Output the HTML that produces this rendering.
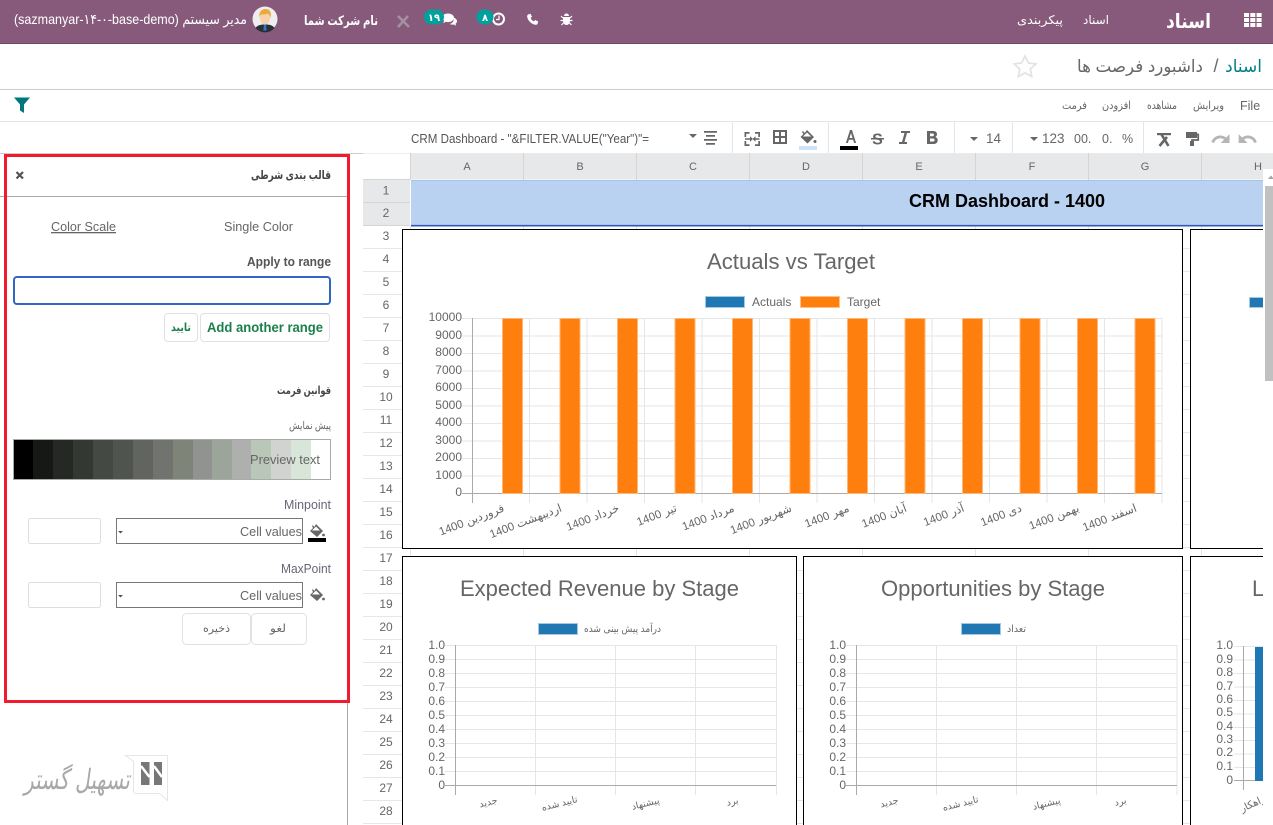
<!DOCTYPE html>
<html lang="fa"><head><meta charset="utf-8"><title>اسناد</title>
<style>
html,body{margin:0;padding:0;background:#fff;overflow:hidden}
svg{display:block;font-family:"Liberation Sans","DejaVu Sans",sans-serif}
.r{direction:rtl;text-anchor:start}
.m{text-anchor:middle}
.e{text-anchor:end}
.g{fill:#666}
.yl{fill:#666;font-size:12px;text-anchor:end}
.xl{fill:#666;font-size:10px;direction:rtl;text-anchor:start}
.ttl{fill:#666;font-size:22px}
.hd{fill:#666;font-size:11px;text-anchor:middle}
.rn{fill:#666;font-size:12px;text-anchor:middle}
.n{fill:#fff;font-size:12px}
.t{fill:#666;font-size:13px}
</style></head><body>
<svg width="1273" height="825" viewBox="0 0 1273 825" xmlns="http://www.w3.org/2000/svg">
<rect width="1273" height="825" fill="#fff"/>

<!-- navbar -->
<rect width="1273" height="43" fill="#875A7B"/>
<rect y="43" width="1273" height="1" fill="#6d4a63"/>
<g fill="#fff">
<rect x="1244" y="13" width="5" height="4"/><rect x="1250.3" y="13" width="5" height="4"/><rect x="1256.6" y="13" width="5" height="4"/>
<rect x="1244" y="18" width="5" height="4"/><rect x="1250.3" y="18" width="5" height="4"/><rect x="1256.6" y="18" width="5" height="4"/>
<rect x="1244" y="23" width="5" height="4"/><rect x="1250.3" y="23" width="5" height="4"/><rect x="1256.6" y="23" width="5" height="4"/>
</g>
<text x="1211" y="28" class="r" fill="#fff" font-size="20" font-weight="bold" textLength="45" lengthAdjust="spacingAndGlyphs">اسناد</text>
<text x="1109" y="24" class="r n" font-size="12" textLength="26" lengthAdjust="spacingAndGlyphs">اسناد</text>
<text x="1063" y="24" class="r n" font-size="12" textLength="46" lengthAdjust="spacingAndGlyphs">پیکربندی</text>

<!-- systray -->
<g fill="#fff">
<path d="M566.500 13.500a2.500 2.500 0 0 1 2.500 2.500h-5a2.500 2.500 0 0 1 2.500-2.500zM563 17h7v4a3.500 4 0 0 1-7 0z"/>
<path d="M563 18l-2-2M570 18l2-2M563 20.500h-2.500M570 20.500h2.500M563.500 23l-2 2M569.500 23l2 2" stroke="#fff" stroke-width="1.200" fill="none"/>
<path d="M528 14.500l2.500-.8 1.500 3-1.400 1.200c.6 1.600 1.700 2.800 3.300 3.500l1.300-1.400 3 1.500-.7 2.500c-.5.800-2 .9-3 .6-3.500-1-6.500-4-7.300-7.600-.2-1 .1-2 .8-2.500z"/>
<path d="M446 14.500c3.500 0 6 1.900 6 4.300s-2.500 4.300-6 4.300c-.8 0-1.500-.1-2.200-.3l-2.500 1.400.8-2.500c-1.300-.8-2.100-1.800-2.100-2.900 0-2.400 2.500-4.300 6-4.300z" transform="translate(2 -1)"/>
<path d="M453.500 17.500c2 .7 3.500 2.100 3.500 3.700 0 1-.6 1.800-1.500 2.500l.7 2-2.300-1.200c-1.500.3-3 .1-4.300-.5 2.800-.5 4.800-3 3.900-6.500z"/>
</g>
<circle cx="498.500" cy="19" r="5.500" fill="none" stroke="#fff" stroke-width="2"/>
<path d="M499 15.500v4h-3" fill="none" stroke="#fff" stroke-width="1.200"/>
<rect x="476.500" y="9.500" width="17" height="15" rx="7.500" fill="#00A09D"/>
<text x="485" y="21" class="m" fill="#fff" font-size="10" font-weight="bold">۸</text>
<rect x="424" y="9.500" width="20" height="15" rx="7.500" fill="#00A09D"/>
<text x="434" y="21" class="m" fill="#fff" font-size="10" font-weight="bold">۱۹</text>
<path d="M398 16l11 11M408 16l-10 11" stroke="#a78fa2" stroke-width="2.600" fill="none"/>
<text x="378" y="25" class="r n" font-size="13" font-weight="bold" textLength="74" lengthAdjust="spacingAndGlyphs" style="font-size:13px">نام شرکت شما</text>
<circle cx="265" cy="19" r="12.500" fill="#eeeef0"/>
<path d="M255.500 28c2-3 5-3.500 9.500-3.500s7.500.5 9.500 3.500a12.500 12.500 0 0 1-19 0z" fill="#2a2f38"/>
<path d="M264 24.500h2l.6 6h-3.200z" fill="#2a7ad0"/>
<ellipse cx="265" cy="18" rx="5" ry="6.500" fill="#f6d1ac"/>
<path d="M259.500 18c-1-6 2-9 6-9s6.500 3 5 9c-.5-2.500-1.500-4-3-4.500-2 1-5.500 1-6.500 1-1 .8-1.300 2-1.500 3.500z" fill="#eba93a"/>
<text x="247" y="24" class="r" fill="#fff" font-size="14" textLength="233" lengthAdjust="spacingAndGlyphs">مدیر سیستم (sazmanyar-۱۴-۰-base-demo)</text>

<!-- control panel -->
<rect y="89" width="1273" height="1" fill="#ccc"/>
<text x="1262" y="72" class="r" fill="#017e84" font-size="17">اسناد</text>
<text x="1216" y="72" class="m" fill="#666" font-size="18">/</text>
<text x="1203" y="72" class="r" fill="#666" font-size="17" textLength="126" lengthAdjust="spacingAndGlyphs">داشبورد فرصت ها</text>
<path d="M1025 56l3.300 6.900 7.500 1-5.500 5.200 1.400 7.500-6.700-3.700-6.700 3.700 1.400-7.500-5.500-5.200 7.500-1z" fill="none" stroke="#e4e4e4" stroke-width="1.800"/>
<path d="M14 97.500h16l-6 7v8.500l-4-2.500v-6z" fill="#00777e"/>

<!-- menu -->
<rect y="121" width="1273" height="1" fill="#e5e5e5"/>
<text x="1240" y="110" fill="#666" font-size="12.500">File</text>
<text x="1224" y="109" class="r g" font-size="11" textLength="31" lengthAdjust="spacingAndGlyphs">ویرایش</text>
<text x="1177" y="109" class="r g" font-size="11" textLength="30" lengthAdjust="spacingAndGlyphs">مشاهده</text>
<text x="1131" y="109" class="r g" font-size="11" textLength="29" lengthAdjust="spacingAndGlyphs">افزودن</text>
<text x="1087" y="109" class="r g" font-size="11" textLength="25" lengthAdjust="spacingAndGlyphs">فرمت</text>

<!-- toolbar -->
<text x="411" y="143" fill="#555" font-size="12.500" textLength="238" lengthAdjust="spacingAndGlyphs">CRM Dashboard - "&amp;FILTER.VALUE("Year")"=</text>
<g fill="#e5e5e5"><rect x="732" y="122" width="1" height="31"/><rect x="828" y="122" width="1" height="31"/><rect x="954" y="122" width="1" height="31"/><rect x="1012" y="122" width="1" height="31"/><rect x="1143" y="122" width="1" height="31"/></g>
<g fill="#666">
<path d="M689 134h8l-4 4z"/>
<path d="M704 131h13v1.700h-13zM706 135h9v1.700h-9zM704 139h13v1.700h-13zM706 143h9v1.700h-9z" />
<path d="M744.500 137v-5h5v1.700h-3.300v3.300zM760 137v-5h-5v1.700h3.300v3.300zM744.500 141v5h5v-1.700h-3.300v-3.300zM760 141v5h-5v-1.700h3.300v-3.300zM745 138.200h5v-2l3 2.800-3 2.800v-2h-5zM759.500 138.200h-4v-2l-3 2.800 3 2.800v-2h4z"/>
<path fill-rule="evenodd" d="M773 130h14v14h-14zM775 132v4h4v-4zM781 132v4h4v-4zM775 138v4h4v-4zM781 138v4h4v-4z"/>
<path d="M807 130l7 7-6.500 6.500-7-6.500 3-3-1.500-2 1-1 1.800 2zM807 132.500l-4 4h8.200z" fill-rule="evenodd"/>
<circle cx="815" cy="141.500" r="1.500"/>
<path d="M846 143l-.1 0 4.100-13h2l4.100 13h-2l-1-3.300h-4.200l-1 3.300zM849.500 138h3l-1.500-5z"/>
<text x="877.500" y="144.500" class="m" font-size="16" font-weight="bold">S</text>
<rect x="871" y="138" width="13" height="1.500"/>
<path d="M901 131h9v2h-3l-2.500 9h2.500v2h-8v-2h3l2.500-9h-3.500z"/>
<path fill-rule="evenodd" d="M927 131h6c2.500 0 4 1.300 4 3.300 0 1.300-.6 2.200-1.700 2.700 1.500.5 2.400 1.600 2.400 3.200 0 2.300-1.700 3.800-4.300 3.800h-6.400zM930 133.500v2.700h2.500c1 0 1.500-.5 1.500-1.400s-.5-1.300-1.500-1.300zM930 138.500v3h3c1 0 1.600-.6 1.600-1.500s-.6-1.500-1.600-1.500z"/>
<path d="M970 137h8l-4 4zM1030 137h8l-4 4z"/>
<rect x="1157" y="133" width="14" height="2.200"/>
<path d="M1161.500 134.500l7 11.500M1167 137l-7.500 9" stroke="#666" stroke-width="2.600" fill="none"/>
<rect x="1186" y="132" width="11" height="6"/>
<path d="M1196 134.500h2.200v5.500h-6.200v2" fill="none" stroke="#666" stroke-width="1.800"/>
<rect x="1190" y="141" width="4" height="5"/>
</g>
<rect x="799" y="146" width="18" height="4" fill="#cfe2f7"/>
<rect x="840" y="146" width="18" height="4" fill="#000"/>
<g fill="#666" font-size="13.500">
<text x="986" y="143">14</text>
<text x="1042" y="143">123</text>
<text x="1074" y="143" font-size="12.500">00.</text>
<text x="1102" y="143" font-size="12.500">0.</text>
<text x="1122" y="143" font-size="12.500">%</text>
</g>
<path transform="translate(1210.500 129) scale(.85)" d="M18.400 10.600C16.550 8.990 14.150 8 11.500 8c-4.650 0-8.580 3.030-9.960 7.220L3.900 16c1.050-3.190 4.050-5.500 7.600-5.500 1.950 0 3.730.72 5.120 1.880L13 16h9V7l-3.600 3.600z" fill="#b5b5b5" stroke="#b5b5b5" stroke-width=".8"/>
<path transform="translate(1237.300 129) scale(.85)" d="M12.500 8c-2.650 0-5.050.99-6.900 2.600L2 7v9h9l-3.620-3.620c1.390-1.160 3.160-1.880 5.120-1.880 3.540 0 6.550 2.310 7.600 5.500l2.370-.78C21.080 11.030 17.150 8 12.500 8z" fill="#b5b5b5" stroke="#b5b5b5" stroke-width=".8"/>

<!-- sheet headers -->
<rect x="363" y="153" width="910" height="1" fill="#eee"/>
<rect x="410" y="153.500" width="863" height="26" fill="#e7e8e9"/>
<rect x="363" y="180" width="47" height="46" fill="#e7e8e9"/>
<path d="M410.500 153v27M523.500 153v27M636.500 153v27M749.500 153v27M862.500 153v27M975.500 153v27M1088.500 153v27M1201.500 153v27" stroke="#d6d6d1"/>
<path d="M363 179.500h47M363 202.500h47M363 225.500h47" stroke="#d6d6d1"/>
<path d="M363 248.500h900M363 271.500h900M363 294.500h900M363 317.500h900M363 340.500h900M363 363.500h900M363 386.500h900M363 409.500h900M363 432.500h900M363 455.500h900M363 478.500h900M363 501.500h900M363 524.500h900M363 547.500h900M363 570.500h900M363 593.500h900M363 616.500h900M363 639.500h900M363 662.500h900M363 685.500h900M363 708.500h900M363 731.500h900M363 754.500h900M363 777.500h900M363 800.500h900M363 823.500h900" stroke="#e6e6e6"/>
<path d="M410.500 226v599M523.500 226v599M636.500 226v599M749.500 226v599M862.500 226v599M975.500 226v599M1088.500 226v599M1201.500 226v599" stroke="#e6e6e6"/>
<text x="467" y="170" class="hd">A</text><text x="580" y="170" class="hd">B</text><text x="693" y="170" class="hd">C</text><text x="806" y="170" class="hd">D</text><text x="919" y="170" class="hd">E</text><text x="1032" y="170" class="hd">F</text><text x="1145" y="170" class="hd">G</text><text x="1258" y="170" class="hd">H</text>
<g class="rn">
<text x="386" y="194.500" class="rn">1</text><text x="386" y="217" class="rn">2</text><text x="386" y="240" class="rn">3</text><text x="386" y="263" class="rn">4</text><text x="386" y="286" class="rn">5</text><text x="386" y="309" class="rn">6</text><text x="386" y="332" class="rn">7</text><text x="386" y="355" class="rn">8</text><text x="386" y="378" class="rn">9</text><text x="386" y="401" class="rn">10</text><text x="386" y="424" class="rn">11</text><text x="386" y="447" class="rn">12</text><text x="386" y="470" class="rn">13</text><text x="386" y="493" class="rn">14</text><text x="386" y="516" class="rn">15</text><text x="386" y="539" class="rn">16</text><text x="386" y="562" class="rn">17</text><text x="386" y="585" class="rn">18</text><text x="386" y="608" class="rn">19</text><text x="386" y="631" class="rn">20</text><text x="386" y="654" class="rn">21</text><text x="386" y="677" class="rn">22</text><text x="386" y="700" class="rn">23</text><text x="386" y="723" class="rn">24</text><text x="386" y="746" class="rn">25</text><text x="386" y="769" class="rn">26</text><text x="386" y="792" class="rn">27</text><text x="386" y="815" class="rn">28</text>
</g>

<!-- title band -->
<rect x="411" y="180" width="852" height="45" fill="#b9d2f1"/>
<rect x="411" y="180" width="852" height="1" fill="#a9c2e8"/>
<rect x="411" y="224" width="852" height="1" fill="#a9c2e8"/>
<rect x="411" y="225" width="852" height="1.500" fill="#3158b5"/>
<text x="909" y="207" font-size="18" font-weight="bold" fill="#000" textLength="196" lengthAdjust="spacingAndGlyphs">CRM Dashboard - 1400</text>

<!-- chart frames -->
<g fill="#fff" stroke="#000" stroke-width="1">
<rect x="402.500" y="229.500" width="780" height="319"/>
<rect x="1190.500" y="229.500" width="100" height="319"/>
<rect x="402.500" y="556.500" width="394" height="290"/>
<rect x="803.500" y="556.500" width="379" height="290"/>
<rect x="1190.500" y="556.500" width="100" height="290"/>
</g>

<!-- chart 1 -->
<text x="707" y="269" class="ttl" textLength="168" lengthAdjust="spacingAndGlyphs">Actuals vs Target</text>
<rect x="705.500" y="296.500" width="39" height="11" fill="#1f77b4" stroke="#a5c9e1"/>
<text x="752" y="306" class="g" font-size="12">Actuals</text>
<rect x="800.500" y="296.500" width="39" height="11" fill="#ff7f0e" stroke="#ffc08a"/>
<text x="847" y="306" class="g" font-size="12">Target</text>
<path d="M462 318.500h700M462 336h700M462 353.500h700M462 371h700M462 388.500h700M462 406h700M462 423.500h700M462 441h700M462 458.500h700M462 476h700" stroke="#e6e6e6"/>
<path d="M529.500 318v185M587 318v185M644.500 318v185M702 318v185M759.500 318v185M817 318v185M874.500 318v185M932 318v185M989.500 318v185M1047 318v185M1104.500 318v185M1162 318v185" stroke="#e6e6e6"/>
<path d="M472.500 318v185M462 493.500h700" stroke="#aaa"/>
<g fill="#ff7f0e" stroke="#ffb778" stroke-width="1">
<rect x="502.500" y="318.500" width="20" height="175"/><rect x="560" y="318.500" width="20" height="175"/><rect x="617.500" y="318.500" width="20" height="175"/><rect x="675" y="318.500" width="20" height="175"/><rect x="732.500" y="318.500" width="20" height="175"/><rect x="790" y="318.500" width="20" height="175"/><rect x="847.500" y="318.500" width="20" height="175"/><rect x="905" y="318.500" width="20" height="175"/><rect x="962.500" y="318.500" width="20" height="175"/><rect x="1020" y="318.500" width="20" height="175"/><rect x="1077.500" y="318.500" width="20" height="175"/><rect x="1135" y="318.500" width="20" height="175"/>
</g>
<text x="462" y="321" class="yl">10000</text><text x="462" y="339" class="yl">9000</text><text x="462" y="356" class="yl">8000</text><text x="462" y="374" class="yl">7000</text><text x="462" y="391" class="yl">6000</text><text x="462" y="409" class="yl">5000</text><text x="462" y="426" class="yl">4000</text><text x="462" y="444" class="yl">3000</text><text x="462" y="461" class="yl">2000</text><text x="462" y="479" class="yl">1000</text><text x="462" y="496" class="yl">0</text>
<g>
<text class="xl" style="font-size:11.500px" transform="translate(505 511) rotate(-21)">فروردین 1400</text>
<text class="xl" style="font-size:11.500px" transform="translate(562.500 511) rotate(-21)">اردیبهشت 1400</text>
<text class="xl" style="font-size:11.500px" transform="translate(620 511) rotate(-21)">خرداد 1400</text>
<text class="xl" style="font-size:11.500px" transform="translate(677.500 511) rotate(-21)">تیر 1400</text>
<text class="xl" style="font-size:11.500px" transform="translate(735 511) rotate(-21)">مرداد 1400</text>
<text class="xl" style="font-size:11.500px" transform="translate(792.500 511) rotate(-21)">شهریور 1400</text>
<text class="xl" style="font-size:11.500px" transform="translate(850 511) rotate(-21)">مهر 1400</text>
<text class="xl" style="font-size:11.500px" transform="translate(907.500 511) rotate(-21)">آبان 1400</text>
<text class="xl" style="font-size:11.500px" transform="translate(965 511) rotate(-21)">آذر 1400</text>
<text class="xl" style="font-size:11.500px" transform="translate(1022.500 511) rotate(-21)">دی 1400</text>
<text class="xl" style="font-size:11.500px" transform="translate(1080 511) rotate(-21)">بهمن 1400</text>
<text class="xl" style="font-size:11.500px" transform="translate(1137.500 511) rotate(-21)">اسفند 1400</text>
</g>

<!-- chart 2 fragment -->
<rect x="1249.500" y="297.500" width="14" height="10" fill="#1f77b4" stroke="#a5c9e1"/>

<!-- chart 3 -->
<text x="460" y="596" class="ttl" textLength="279" lengthAdjust="spacingAndGlyphs">Expected Revenue by Stage</text>
<rect x="538.500" y="623.500" width="39" height="11" fill="#1f77b4" stroke="#a5c9e1"/>
<text x="661" y="632" class="r g" font-size="10" textLength="77" lengthAdjust="spacingAndGlyphs">درآمد پیش بینی شده</text>
<path d="M445 645.500h331M445 659.500h331M445 673.500h331M445 687.500h331M445 701.500h331M445 715.500h331M445 729.500h331M445 743.500h331M445 757.500h331M445 771.500h331" stroke="#e6e6e6"/>
<path d="M535.500 645v150M615.500 645v150M695.500 645v150M776.500 645v150" stroke="#e6e6e6"/>
<path d="M455.500 645v150M445 785.500h331" stroke="#aaa"/>
<text x="445" y="649" class="yl">1.0</text><text x="445" y="663" class="yl">0.9</text><text x="445" y="677" class="yl">0.8</text><text x="445" y="691" class="yl">0.7</text><text x="445" y="705" class="yl">0.6</text><text x="445" y="719" class="yl">0.5</text><text x="445" y="733" class="yl">0.4</text><text x="445" y="747" class="yl">0.3</text><text x="445" y="761" class="yl">0.2</text><text x="445" y="775" class="yl">0.1</text><text x="445" y="789" class="yl">0</text>
<text class="xl" style="font-size:9.500px" transform="translate(498 803) rotate(-14)">جدید</text>
<text class="xl" style="font-size:9.500px" transform="translate(578 802) rotate(-14)">تایید شده</text>
<text class="xl" style="font-size:9.500px" transform="translate(660 803) rotate(-14)">پیشنهاد</text>
<text class="xl" style="font-size:9.500px" transform="translate(739 803) rotate(-14)">برد</text>

<!-- chart 4 -->
<text x="881" y="596" class="ttl" textLength="224" lengthAdjust="spacingAndGlyphs">Opportunities by Stage</text>
<rect x="961.500" y="623.500" width="39" height="11" fill="#1f77b4" stroke="#a5c9e1"/>
<text x="1026" y="632" class="r g" font-size="10" textLength="19" lengthAdjust="spacingAndGlyphs">تعداد</text>
<path d="M846 645.500h331M846 659.500h331M846 673.500h331M846 687.500h331M846 701.500h331M846 715.500h331M846 729.500h331M846 743.500h331M846 757.500h331M846 771.500h331" stroke="#e6e6e6"/>
<path d="M936.500 645v150M1016.500 645v150M1096.500 645v150M1177 645v150" stroke="#e6e6e6"/>
<path d="M856.500 645v150M846 785.500h331" stroke="#aaa"/>
<text x="846" y="649" class="yl">1.0</text><text x="846" y="663" class="yl">0.9</text><text x="846" y="677" class="yl">0.8</text><text x="846" y="691" class="yl">0.7</text><text x="846" y="705" class="yl">0.6</text><text x="846" y="719" class="yl">0.5</text><text x="846" y="733" class="yl">0.4</text><text x="846" y="747" class="yl">0.3</text><text x="846" y="761" class="yl">0.2</text><text x="846" y="775" class="yl">0.1</text><text x="846" y="789" class="yl">0</text>
<text class="xl" style="font-size:9.500px" transform="translate(899 803) rotate(-14)">جدید</text>
<text class="xl" style="font-size:9.500px" transform="translate(979 802) rotate(-14)">تایید شده</text>
<text class="xl" style="font-size:9.500px" transform="translate(1061 803) rotate(-14)">پیشنهاد</text>
<text class="xl" style="font-size:9.500px" transform="translate(1127 803) rotate(-14)">برد</text>

<!-- chart 5 fragment -->
<text x="1252" y="596" fill="#666" font-size="22">L</text>
<path d="M1234 646.500h29M1234 660h29M1234 673.500h29M1234 687h29M1234 700.500h29M1234 714h29M1234 727.500h29M1234 740.500h29M1234 754h29M1234 767.500h29" stroke="#e6e6e6"/>
<path d="M1243.500 646v144M1234 780.500h29" stroke="#aaa"/>
<rect x="1255" y="647" width="8" height="134" fill="#1f77b4"/>
<text x="1233" y="649" class="yl">1.0</text><text x="1233" y="663" class="yl">0.9</text><text x="1233" y="676" class="yl">0.8</text><text x="1233" y="690" class="yl">0.7</text><text x="1233" y="703" class="yl">0.6</text><text x="1233" y="716" class="yl">0.5</text><text x="1233" y="730" class="yl">0.4</text><text x="1233" y="743" class="yl">0.3</text><text x="1233" y="756" class="yl">0.2</text><text x="1233" y="770" class="yl">0.1</text><text x="1233" y="784" class="yl">0</text>
<text class="xl" transform="translate(1266 801) rotate(-25)">راهکار</text>

<!-- right scrollbar -->
<rect x="1263" y="169" width="10" height="656" fill="#fff"/>
<rect x="1265" y="186" width="8" height="195" fill="#c1c1c1"/>
<path d="M1268 179l3-3.500 3 3.500z" fill="#a3a3a3"/>

<!-- side panel -->
<rect x="0" y="153" width="363" height="1" fill="#ccc"/>
<rect x="0" y="154" width="363" height="671" fill="#fff"/>
<rect x="347" y="703" width="1" height="122" fill="#aaa"/>
<rect x="0" y="196" width="347" height="1" fill="#aaa"/>
<path d="M16.500 172l6.500 6.500M23 172l-6.500 6.500" stroke="#555" stroke-width="2.200" fill="none"/>
<text x="331" y="179" class="r" fill="#444" font-size="12" font-weight="bold" textLength="80" lengthAdjust="spacingAndGlyphs">قالب بندی شرطی</text>
<text x="51" y="231" class="t" font-size="12.500" textLength="65" lengthAdjust="spacingAndGlyphs" text-decoration="underline">Color Scale</text>
<text x="224" y="231" class="t" font-size="12.500" textLength="69" lengthAdjust="spacingAndGlyphs">Single Color</text>
<text x="247" y="266" fill="#555" font-size="12.500" font-weight="bold" textLength="84" lengthAdjust="spacingAndGlyphs">Apply to range</text>
<rect x="14" y="277" width="316" height="27" rx="3" fill="#fff" stroke="#3266c4" stroke-width="2"/>
<rect x="200.500" y="313.500" width="129" height="28" rx="3.500" fill="#fff" stroke="#dee2e6"/>
<rect x="164.500" y="313.500" width="33" height="28" rx="3.500" fill="#fff" stroke="#dee2e6"/>
<text x="207" y="332" fill="#1a7f4a" font-size="14" font-weight="bold" textLength="116" lengthAdjust="spacingAndGlyphs">Add another range</text>
<text x="191" y="331" class="r" fill="#1a7f4a" font-size="11" font-weight="bold" textLength="20" lengthAdjust="spacingAndGlyphs">تایید</text>
<text x="331" y="394" class="r" fill="#444" font-size="11" font-weight="bold" textLength="54" lengthAdjust="spacingAndGlyphs">قوانین فرمت</text>
<text x="331" y="429" class="r g" font-size="10.500" textLength="42" lengthAdjust="spacingAndGlyphs">پیش نمایش</text>
<!-- preview -->
<rect x="14" y="440" width="19" height="39" fill="#000"/>
<rect x="33" y="440" width="20" height="39" fill="#161816"/>
<rect x="53" y="440" width="20" height="39" fill="#262826"/>
<rect x="73" y="440" width="20" height="39" fill="#343833"/>
<rect x="93" y="440" width="20" height="39" fill="#454943"/>
<rect x="113" y="440" width="20" height="39" fill="#50544f"/>
<rect x="133" y="440" width="20" height="39" fill="#626460"/>
<rect x="153" y="440" width="20" height="39" fill="#71736f"/>
<rect x="173" y="440" width="20" height="39" fill="#7f8479"/>
<rect x="193" y="440" width="19" height="39" fill="#90938f"/>
<rect x="212" y="440" width="20" height="39" fill="#9ba59a"/>
<rect x="232" y="440" width="19" height="39" fill="#aeb0ad"/>
<rect x="251" y="440" width="20" height="39" fill="#b8c7b8"/>
<rect x="271" y="440" width="20" height="39" fill="#d1d3d0"/>
<rect x="291" y="440" width="20" height="39" fill="#d7e6d9"/>
<rect x="311" y="440" width="19" height="39" fill="#fff"/>
<rect x="13.500" y="439.500" width="317" height="40" fill="none" stroke="#aaa"/>
<text x="250" y="464" fill="#666" font-size="12.500" textLength="70" lengthAdjust="spacingAndGlyphs">Preview text</text>
<!-- min -->
<text x="284" y="509" fill="#667" font-size="12.500" textLength="47" lengthAdjust="spacingAndGlyphs">Minpoint</text>
<rect x="116.500" y="518.500" width="186" height="25" fill="#fff" stroke="#777"/>
<path d="M118 531h5l-2.500 2.500z" fill="#555"/>
<text x="240" y="536" class="g" font-size="12.500" textLength="62" lengthAdjust="spacingAndGlyphs">Cell values</text>
<rect x="28.500" y="518.500" width="72" height="25" rx="2" fill="#fff" stroke="#ddd"/>
<path d="M316 524l7 7-6 6-7-6 3-3-1-2 .8-.8 1.500 1.800zM316 526.500l-4 4h8z" fill="#666" fill-rule="evenodd"/>
<circle cx="323.500" cy="535" r="1.400" fill="#666"/>
<rect x="308" y="538" width="18" height="4" fill="#000"/>
<!-- max -->
<text x="281" y="573" fill="#667" font-size="12.500" textLength="50" lengthAdjust="spacingAndGlyphs">MaxPoint</text>
<rect x="116.500" y="582.500" width="186" height="25" fill="#fff" stroke="#777"/>
<path d="M118 595h5l-2.500 2.500z" fill="#555"/>
<text x="240" y="600" class="g" font-size="12.500" textLength="62" lengthAdjust="spacingAndGlyphs">Cell values</text>
<rect x="28.500" y="582.500" width="72" height="25" rx="2" fill="#fff" stroke="#ddd"/>
<path d="M316 588l7 7-6 6-7-6 3-3-1-2 .8-.8 1.500 1.800zM316 590.500l-4 4h8z" fill="#666" fill-rule="evenodd"/>
<circle cx="323.500" cy="599" r="1.400" fill="#666"/>
<!-- buttons -->
<rect x="182.500" y="613.500" width="68" height="31" rx="4" fill="#fff" stroke="#dee2e6"/>
<rect x="251.500" y="613.500" width="55" height="31" rx="4" fill="#fff" stroke="#dee2e6"/>
<text x="230" y="632" class="r g" font-size="11" textLength="27" lengthAdjust="spacingAndGlyphs">ذخیره</text>
<text x="286" y="632" class="r g" font-size="11" textLength="16" lengthAdjust="spacingAndGlyphs">لغو</text>
<!-- red frame -->
<rect x="5.500" y="155.500" width="343" height="546" fill="none" stroke="#f01b2d" stroke-width="3"/>

<!-- logo -->
<path d="M125.500 755.500h42v45l-8-7h-24a2 2 0 0 1-2-2v-30z" fill="#fff" stroke="#e6e6e6"/>
<rect x="141" y="762" width="8.500" height="23" fill="#777"/>
<rect x="154" y="762" width="8" height="23" fill="#777"/>
<path d="M141 766l8.500 11M154 766l8 11" stroke="#fff" stroke-width="2.500" fill="none"/>
<text x="0" y="0" class="r" fill="#a8a8a8" font-size="28" textLength="106" lengthAdjust="spacingAndGlyphs" transform="translate(130 789) skewX(-8)">تسهیل گستر</text>
</svg>
</body></html>
